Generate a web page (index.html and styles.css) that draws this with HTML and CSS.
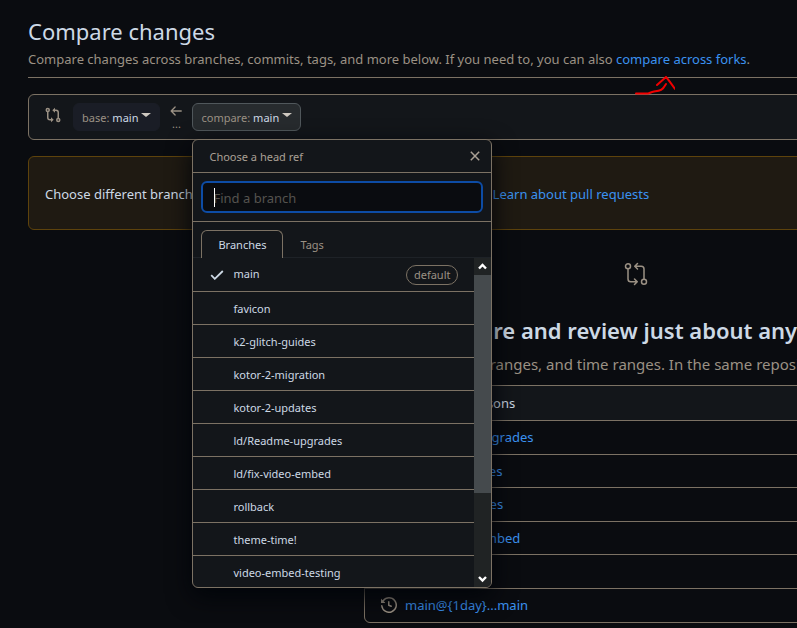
FILE: index.html
```html
<!DOCTYPE html>
<html lang="en">
<head>
<meta charset="utf-8">
<title>Compare changes</title>
<link rel="stylesheet" href="styles.css">
</head>
<body>
<svg class="defs" aria-hidden="true">
  <symbol id="compare" viewBox="0 0 24 24">
    <g fill="none" stroke="currentColor" stroke-width="1.5" stroke-linecap="round" stroke-linejoin="round">
      <circle cx="4" cy="4.25" r="2.5"/><circle cx="20" cy="19.75" r="2.5"/>
      <path d="M4 7v10a2.75 2.75 0 0 0 2.75 2.75H13M10.500 17l2.750 2.750-2.750 2.750M20 17V7a2.750 2.750 0 0 0-2.750-2.750H11M13.500 1.500l-2.750 2.750L13.500 7"/>
    </g>
  </symbol>
  <symbol id="history" viewBox="0 0 16 16">
    <path fill="currentColor" d="M1.643 3.143.427 1.927A.25.25 0 0 0 0 2.104V5.750c0 .138.112.25.25.25h3.646a.25.25 0 0 0 .177-.427L2.715 4.215a6.500 6.500 0 1 1-1.180 4.458.750.750 0 1 0-1.493.154 8.001 8.001 0 1 0 1.600-5.684ZM7.750 4a.750.750 0 0 1 .750.750v2.992l2.028.812a.750.750 0 0 1-.557 1.392l-2.500-1A.751.751 0 0 1 7 8.250v-3.500A.750.750 0 0 1 7.750 4Z"/>
  </symbol>
</svg>
<main class="page">
  <header class="subhead">
    <h1>Compare changes</h1>
    <p>Compare changes across branches, commits, tags, and more below. If you need to, you can also <a class="forks" href="#">compare across forks<svg class="arrow" viewBox="0 0 40 20" aria-hidden="true"><path d="M1 17.500H13C15 17 16 16 19 15.500S27 15 29 11L31 8M22 9L31 1Q33 3 40 13" fill="none" stroke="#f00000" stroke-width="2" stroke-linecap="round"/></svg></a>.</p>
  </header>

  <section class="range">
    <svg class="range-icon" viewBox="0 0 16 16" aria-hidden="true"><g fill="none" stroke="currentColor" stroke-width="1.500" stroke-linecap="round"><circle cx="2.750" cy="3" r="1.500"/><circle cx="13.250" cy="13" r="1.500"/><path d="M2.750 5v5.500A2.250 2.250 0 0 0 5 12.750h1M13.250 11V5.500A2.250 2.250 0 0 0 11 3.250h-1"/></g><path fill="currentColor" d="M6 10.300v4.900L8.700 12.750ZM10 .800v4.900L7.300 3.250Z"/></svg>
    <button class="ref" type="button"><span>base:</span> main <i class="caret"></i></button>
    <div class="dots"><svg viewBox="0 0 16 16" aria-hidden="true"><path d="M14 8H3M7 3.500 2.500 8 7 12.500" fill="none" stroke="currentColor" stroke-width="1.500" stroke-linecap="round" stroke-linejoin="round"/></svg><span>...</span></div>
    <div class="picker">
      <button class="ref open" type="button" aria-expanded="true"><span>compare:</span> main <i class="caret"></i></button>
      <div class="menu">
        <div class="menu-head">
          <h2>Choose a head ref</h2>
          <button class="close" type="button" aria-label="Close"><svg viewBox="0 0 10 10"><path d="m.800.800 8.400 8.400M9.200.800.800 9.200" stroke="currentColor" stroke-width="1.500"/></svg></button>
        </div>
        <div class="filter"><input type="text" aria-label="Find a branch" placeholder="Find a branch"><i class="cursor"></i></div>
        <div class="tabs" role="tablist">
          <button class="tab selected" type="button" role="tab" aria-selected="true">Branches</button>
          <button class="tab" type="button" role="tab" aria-selected="false">Tags</button>
        </div>
        <div class="list">
          <ul>
            <li><a href="#"><svg class="check" viewBox="0 0 14 10" aria-hidden="true"><path d="m1.200 5.200 3.600 3.600L12.800 1" fill="none" stroke="currentColor" stroke-width="1.800"/></svg><span class="name">main</span><span class="label">default</span></a></li>
            <li><a href="#">favicon</a></li>
            <li><a href="#">k2-glitch-guides</a></li>
            <li><a href="#">kotor-2-migration</a></li>
            <li><a href="#">kotor-2-updates</a></li>
            <li><a href="#">ld/Readme-upgrades</a></li>
            <li><a href="#">ld/fix-video-embed</a></li>
            <li><a href="#">rollback</a></li>
            <li><a href="#">theme-time!</a></li>
            <li><a href="#">video-embed-testing</a></li>
          </ul>
          <div class="scroll" aria-hidden="true">
            <svg viewBox="0 0 17 17"><path d="m5 10.500 3.500-3.500 3.500 3.500" fill="none" stroke="#fff" stroke-width="2.400"/></svg>
            <div class="track"><div class="thumb"></div></div>
            <svg viewBox="0 0 17 17"><path d="m5 7 3.500 3.500L12 7" fill="none" stroke="#fff" stroke-width="2.400"/></svg>
          </div>
        </div>
      </div>
    </div>
  </section>

  <section class="notice">
    <p>Choose different branches or forks above to discuss and review changes.</p>
    <a href="#">Learn about pull requests</a>
  </section>

  <section class="blank">
    <svg class="blank-icon" aria-hidden="true"><use href="#compare"/></svg>
    <h2>Compare and review just about anything</h2>
    <p>Branches, tags, commit ranges, and time ranges. In the same repository and across forks.</p>
    <div class="examples">
      <h3>Example comparisons</h3>
      <ul>
        <li><svg aria-hidden="true"><use href="#compare"/></svg><a href="#">ld/Readme-upgrades</a><time>7 minutes ago</time></li>
        <li><svg aria-hidden="true"><use href="#compare"/></svg><a href="#">k2-glitch-guides</a></li>
        <li><svg aria-hidden="true"><use href="#compare"/></svg><a href="#">kotor-2-updates</a></li>
        <li><svg aria-hidden="true"><use href="#compare"/></svg><a href="#">ld/fix-video-embed</a></li>
        <li><svg aria-hidden="true"><use href="#compare"/></svg><a href="#">rollback</a></li>
        <li><svg aria-hidden="true"><use href="#history"/></svg><a href="#">main@{1day}...main</a></li>
      </ul>
    </div>
  </section>
</main>
</body>
</html>
```

FILE: styles.css
```css
:root {
  --bg: #0a0c10;
  --panel: #13161a;
  --line: #7c7264;
  --muted: #9b9184;
  --text: #cdd9e5;
  --link: #3b92f0;
}
* { box-sizing: border-box; }
html { overflow: hidden; }
body {
  margin: 0;
  background: var(--bg);
  color: var(--text);
  font: 13px/1.5 "Noto Sans", "Open Sans", sans-serif;
}
h1, h2, h3, p, ul { margin: 0; padding: 0; font-weight: 400; }
ul { list-style: none; }
a { color: var(--link); text-decoration: none; }
button { font: inherit; color: inherit; background: none; border: 0; padding: 0; }
.defs { position: absolute; width: 0; height: 0; }
.page { max-width: 1216px; min-width: 1216px; margin: 0 28px; padding-top: 15px; }

.subhead { height: 63px; border-bottom: 1px solid var(--line); }
.subhead h1 { font-size: 22px; line-height: 32px; }
.subhead p { color: var(--muted); line-height: 24px; }
.forks { position: relative; }
.arrow { position: absolute; left: 19px; top: 26px; width: 40px; height: 20px; }

.range {
  display: flex;
  align-items: center;
  height: 46px;
  margin-top: 16px;
  padding: 0 16px;
  background: var(--panel);
  border: 1px solid var(--line);
  border-radius: 6px;
  font-size: 11px;
}
.range-icon { width: 16px; height: 16px; margin-bottom: 4px; color: var(--muted); }
.ref {
  display: flex;
  align-items: center;
  gap: 3px;
  height: 28px;
  padding: 2px 8px 0;
  border: 1px solid #1a1d26;
  border-radius: 6px;
  background: #1a1d26;
  white-space: nowrap;
}
.range > .ref { margin-left: 12px; }
.ref span { color: var(--muted); }
.open { background: #272b2e; border-color: #50575b; }
.caret { border: 5px solid transparent; border-top: 4px solid #cfc9c1; border-bottom: 0; margin-bottom: 6px; }
.dots { width: 32px; display: flex; flex-direction: column; align-items: center; color: var(--muted); }
.dots svg { width: 14px; height: 14px; }
.dots span { line-height: 12px; }
.picker { position: relative; }

.menu {
  position: absolute;
  z-index: 2;
  top: 36px;
  left: 0;
  width: 300px;
  overflow: hidden;
  background: var(--panel);
  border: 1px solid var(--line);
  border-radius: 6px;
  box-shadow: 0 8px 24px #010409;
}
.menu-head {
  display: flex;
  align-items: center;
  justify-content: space-between;
  height: 33px;
  padding: 0 11px 0 16px;
  border-bottom: 1px solid var(--line);
}
.menu-head h2 { padding-top: 2px; font-size: 11px; color: #aaa095; }
.close { display: flex; color: #aaa095; }
.close svg { width: 10px; height: 10px; }
.filter { position: relative; padding: 8px; border-bottom: 1px solid var(--line); }
.filter input {
  display: block;
  width: 100%;
  height: 32px;
  padding: 2px 10px 0;
  color: var(--text);
  background: var(--bg);
  border: 2px solid #0d4ca5;
  border-radius: 6px;
  font: inherit;
  font-size: 13px;
  outline: 0;
}
.filter input::placeholder { color: #55534f; opacity: 1; }
.cursor { position: absolute; left: 21px; top: 15px; width: 1px; height: 19px; background: #fff; }
.tabs { display: flex; padding: 8px 8px 0; border-bottom: 1px solid #1e2227; }
.tab { height: 28px; margin-bottom: -1px; padding: 2px 16px 0; color: var(--muted); border: 1px solid transparent; border-bottom: 0; border-radius: 6px 6px 0 0; }
.selected { color: var(--text); border-color: var(--line); background: var(--panel); }
.list { display: flex; height: 329px; }
.list ul { flex: 1; overflow: hidden; }
.list a {
  display: flex;
  align-items: center;
  height: 33px;
  padding: 2px 16px 0 40px;
  color: var(--text);
  border-bottom: 1px solid var(--line);
}
.list li:first-child a { height: 34px; padding: 0 16px 0 17px; }
.check { width: 14px; height: 10px; margin-right: 9px; }
.name { flex: 1; }
.label { padding: 0 7px; line-height: 18px; color: var(--muted); border: 1px solid var(--line); border-radius: 10px; }
.scroll { display: flex; flex-direction: column; width: 17px; background: #202324; }
.scroll svg { width: 17px; height: 17px; }
.track { flex: 1; }
.thumb { height: 74%; background: #454a4d; }

.notice {
  display: flex;
  align-items: center;
  height: 74px;
  margin-top: 16px;
  padding: 3px 16px 0;
  background: #1f1a12;
  border: 1px solid #5e430c;
  border-radius: 6px;
}
.notice p { white-space: nowrap; margin-right: 4px; }
.blank { display: flex; flex-direction: column; align-items: center; padding-top: 32px; }
.blank-icon { width: 24px; height: 24px; color: var(--muted); }
.blank h2 { margin-top: 28px; font-size: 22px; line-height: 32px; font-weight: 600; }
.blank p { margin-top: 6px; font-size: 15px; line-height: 24px; color: var(--muted); }
.examples { width: 544px; margin-top: 9px; border: 1px solid var(--line); border-radius: 6px; }
.examples h3 { height: 35px; padding: 0 16px; font-size: 13px; line-height: 34px; background: var(--panel); border-bottom: 1px solid var(--line); border-radius: 6px 6px 0 0; }
.examples li { display: flex; align-items: center; padding: 7px 16px 6px; border-bottom: 1px solid var(--line); }
.examples li:last-child { border-bottom: 0; padding-bottom: 7px; }
.examples svg { width: 16px; height: 16px; margin-right: 8px; color: var(--muted); }
.examples time { margin-left: auto; }
```
